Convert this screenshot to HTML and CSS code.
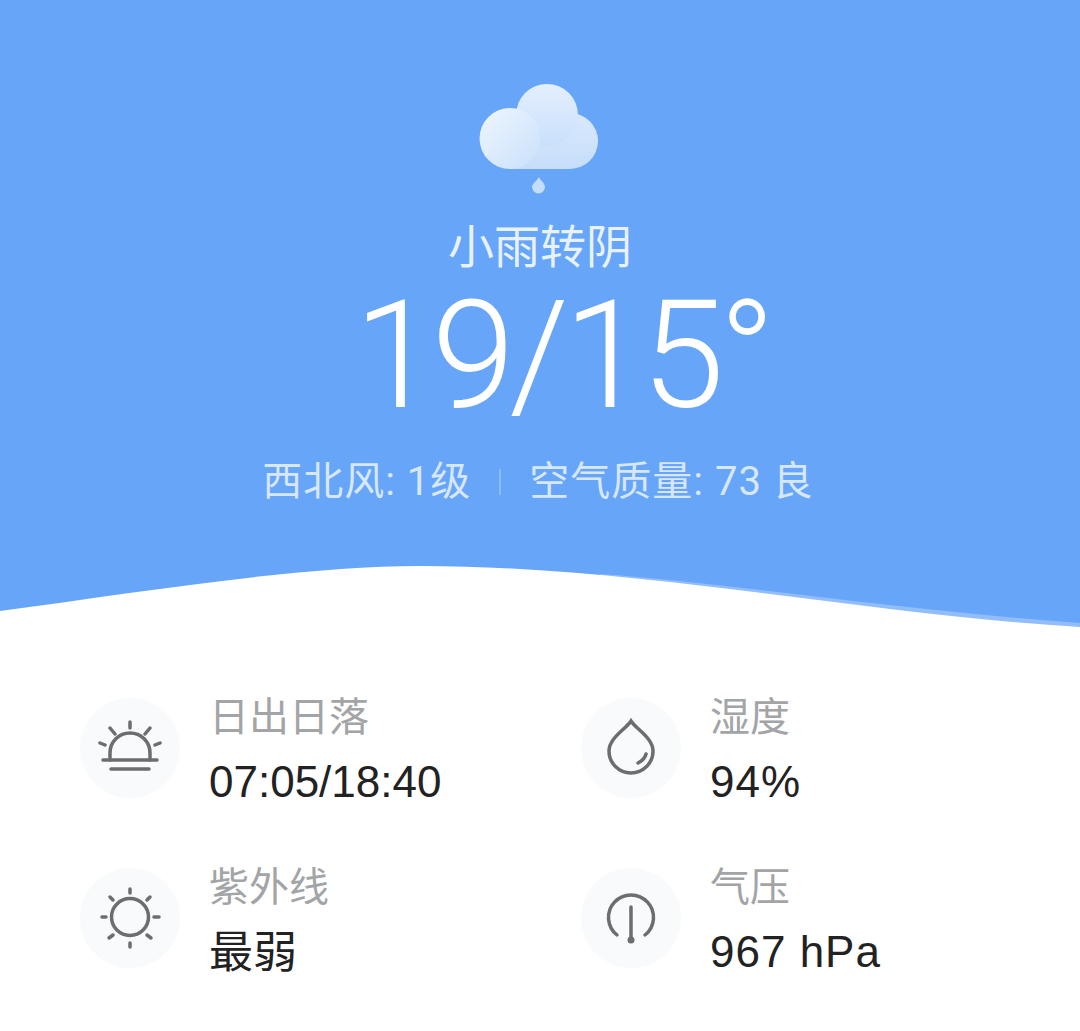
FILE: index.html
```html
<!DOCTYPE html>
<html lang="zh-CN">

<head>
    <meta charset="utf-8">
    <meta name="viewport" content="width=device-width, initial-scale=1.0">
    <title>天气</title>

    <link rel="stylesheet" href="styles.css">
</head>

<body>
    <header class="hero">
        <svg class="cloud" width="130" height="116" viewBox="0 0 130 116">
            <defs>
                <linearGradient id="cloudBase" gradientUnits="userSpaceOnUse" x1="0" y1="30" x2="0" y2="90">
                    <stop offset="0" stop-color="#dbeafc" />
                    <stop offset="1" stop-color="#c6defa" />
                </linearGradient>
                <linearGradient id="cloudBack" gradientUnits="userSpaceOnUse" x1="0" y1="5" x2="0" y2="67">
                    <stop offset="0" stop-color="#e4effd" />
                    <stop offset="1" stop-color="#c9e0fb" />
                </linearGradient>
                <linearGradient id="cloudFront" x1="0" y1="0" x2="1" y2="1">
                    <stop offset="0" stop-color="#eff6fe" />
                    <stop offset="1" stop-color="#c9e0fb" />
                </linearGradient>
            </defs>
            <circle fill="url(#cloudBase)" cx="95" cy="62" r="28" />
            <rect fill="url(#cloudBase)" x="35" y="60" width="60" height="30" />
            <circle fill="url(#cloudBack)" cx="72" cy="36" r="31" />
            <circle fill="url(#cloudFront)" cx="35" cy="59.500" r="30.500" />
            <path fill="#c4ddfb" d="M64 98c1 3 6 6 6 10a6.500 6.500 0 0 1 -13 0c0 -3 4 -5 7 -10z" />
        </svg>
        <h2 class="condition">小雨转阴</h2>
        <h1 class="temp">19/15°</h1>
        <p class="stats">
            <span>西北风: 1级</span>
            <i class="divider"></i>
            <span>空气质量: 73 良</span>
        </p>
        <svg class="wave" width="1080" height="75" viewBox="0 0 1080 75" preserveAspectRatio="none">
            <path fill="#92bdf9" d="M600 22C720 30 880 56 1080 71V75H600z" />
            <path fill="#fff" d="M0 59C140 40 300 14 420 14C640 14 860 62 1080 75V75H0z" />
        </svg>
    </header>

    <main class="details">
        <article class="item">
            <div class="icon">
                <svg width="64" height="64" viewBox="0 0 64 64">
                    <path d="M12 44V37a20 20 0 0 1 40 0V44M32 6v6M12 12l5 6M52 12l-5 6M2 27l5 2M62 27l-5 2" />
                    <path d="M5 44h54M13 53h38" />
                </svg>
            </div>
            <div>
                <h3 class="label">日出日落</h3>
                <p class="value">07:05/18:40</p>
            </div>
        </article>

        <article class="item">
            <div class="icon">
                <svg width="64" height="64" viewBox="0 0 64 64">
                    <path d="M32 5C27 13 10 22 10 35a22 22 0 0 0 44 0C54 22 37 13 32 5z" />
                    <path d="M39 47c4 -2 7 -5 8 -9" />
                </svg>
            </div>
            <div>
                <h3 class="label">湿度</h3>
                <p class="value wide">94%</p>
            </div>
        </article>

        <article class="item">
            <div class="icon">
                <svg width="64" height="64" viewBox="0 0 64 64">
                    <circle cx="32" cy="31" r="18.500" />
                    <path d="M32 3v4M32 57v4M4 31h4M56 31h5M12 11l3 3M52 11l-3 3M11 52l4 -3M53 52l-4 -3" />
                </svg>
            </div>
            <div>
                <h3 class="label">紫外线</h3>
                <p class="value zh">最弱</p>
            </div>
        </article>

        <article class="item">
            <div class="icon">
                <svg width="64" height="64" viewBox="0 0 64 64">
                    <path d="M18 49a22.500 22.500 0 1 1 28 0" />
                    <path d="M32 21v32" />
                    <circle class="dot" cx="32" cy="54" r="3.500" />
                </svg>
            </div>
            <div>
                <h3 class="label">气压</h3>
                <p class="value wide">967 hPa</p>
            </div>
        </article>
    </main>
</body>

</html>
```

FILE: styles.css
```css
* {
    box-sizing: border-box;
}

body {
    margin: 0;
    background: #fff;
    font-family: "Liberation Sans", "Noto Sans CJK SC", sans-serif;
}

.hero {
    position: relative;
    height: 627px;
    padding-top: 79px;
    background: #66a5f8;
    color: #fff;
    text-align: center;
}

.cloud {
    display: block;
    margin: 0 auto;
}

.condition {
    margin: 23px 0 0;
    font-size: 46px;
    line-height: 50px;
    font-weight: 400;
    font-family: "Noto Sans CJK SC", sans-serif;
    color: #e8f1fe;
}

.temp {
    margin: 4px 0 0 44px;
    font-family: Roboto, sans-serif;
    font-size: 150px;
    line-height: 168px;
    font-weight: 300;
    letter-spacing: -5.500px;
}

.stats {
    display: flex;
    justify-content: center;
    align-items: center;
    gap: 28px;
    margin: 17px 0 0 -4px;
    font-family: Roboto, "Noto Sans CJK SC", sans-serif;
    font-size: 40px;
    line-height: 50px;
    font-weight: 400;
    color: #d7e7fd;
    letter-spacing: 1px;
}

.divider {
    width: 2px;
    height: 26px;
    background: #8bbbfa;
}

.wave {
    position: absolute;
    left: 0;
    bottom: 0;
    display: block;
}

.details {
    display: grid;
    grid-template-columns: 501px 1fr;
    row-gap: 52px;
    padding: 62px 0 0 80px;
}

.item {
    display: flex;
    align-items: center;
    gap: 29px;
}

.icon {
    display: flex;
    align-items: center;
    justify-content: center;
    flex: none;
    width: 100px;
    height: 100px;
    border-radius: 50%;
    background: #f8fafb;
}

.icon svg {
    display: block;
    fill: none;
    stroke: #6b6d70;
    stroke-width: 3.500;
    stroke-linecap: round;
}

.icon .dot {
    fill: #6b6d70;
    stroke: none;
}

.label {
    margin: 0;
    font-size: 40px;
    line-height: 50px;
    font-weight: 400;
    color: #a2a4a6;
    font-family: "Noto Sans CJK SC", sans-serif;
}

.value {
    margin: 18px 0 0;
    font-size: 44px;
    line-height: 50px;
    color: #222;
}

.value.wide {
    letter-spacing: 1px;
}

.value.zh {
    margin: 15px 0 3px;
    font-family: "Noto Sans CJK SC", sans-serif;
}
```
